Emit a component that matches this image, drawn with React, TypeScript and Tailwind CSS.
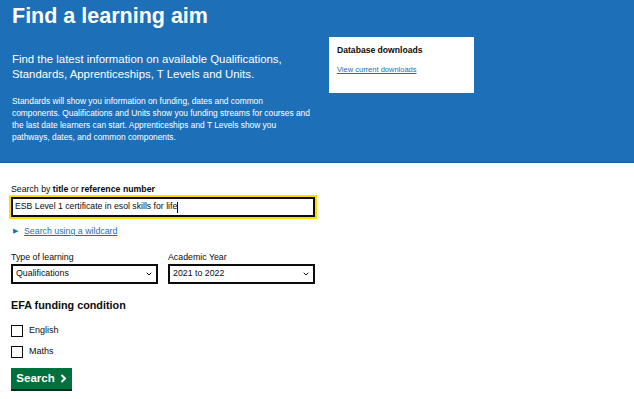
import { ChevronDown } from 'lucide-react';

const font = { fontFamily: '"Liberation Sans", Arial, sans-serif' };

function Select({ value }: { value: string }) {
  return (
    <div className="flex items-center justify-between h-[20px] border-2 border-[#0b0c0c] pl-[3px] pr-[3px] text-[8.8px] text-[#0b0c0c] bg-white">
      <span>{value}</span>
      <ChevronDown className="w-[8px] h-[8px]" strokeWidth={3} />
    </div>
  );
}

function Checkbox({ label }: { label: string }) {
  return (
    <label className="flex items-center gap-[6px] h-[12px]">
      <span className="w-[12px] h-[12px] border-[1.5px] border-[#0b0c0c] bg-white" />
      <span className="text-[9px] text-[#0b0c0c]">{label}</span>
    </label>
  );
}

export default function App() {
  return (
    <div className="w-[634px] h-[399px] bg-white overflow-hidden" style={font}>
      <div className="bg-[#1d70b8] h-[163px] border-b border-[#175e9c] px-[12px] text-white">
        <h1 className="text-[21.5px] font-bold leading-[32px]">Find a learning aim</h1>
        <div className="flex gap-[17px]">
          <div className="w-[300px]">
            <p className="text-[11.4px] leading-[15px] mt-[20px]">
              Find the latest information on available Qualifications, Standards, Apprenticeships, T Levels and Units.
            </p>
            <p className="text-[8.4px] leading-[12px] mt-[13px]">
              Standards will show you information on funding, dates and common components. Qualifications and Units show you funding streams for courses and the last date learners can start. Apprenticeships and T Levels show you pathways, dates, and common components.
            </p>
          </div>
          <div className="mt-[5px] w-[145px] h-[56px] bg-white text-[#0b0c0c] px-[8px] pt-[7px]">
            <div className="text-[8.6px] font-bold leading-[12px]">Database downloads</div>
            <a className="block mt-[9px] text-[7.5px] leading-[10px] text-[#1d70b8] underline">View current downloads</a>
          </div>
        </div>
      </div>
      <div className="px-[11px] pt-[20px] text-[#0b0c0c]">
        <div className="text-[8.75px] leading-[12px]">
          Search by <b>title</b> or <b>reference number</b>
        </div>
        <div className="mt-[2px] w-[304px] h-[20px] border-2 border-[#0b0c0c] outline outline-2 outline-[#ffdd00] flex items-center pl-[2px] text-[8.7px]">
          ESB Level 1 certificate in esol skills for life
          <span className="w-[1px] h-[11px] bg-[#0b0c0c]" />
        </div>
        <div className="flex items-center gap-[6px] mt-[8px] ml-[2px] text-[8.8px] leading-[12px]">
          <span className="text-[#1d70b8] text-[7px]">▶</span>
          <a className="text-[#1d70b8] underline">Search using a wildcard</a>
        </div>
        <div className="flex gap-[10px] mt-[14px]">
          <div className="w-[147px]">
            <div className="text-[8.8px] leading-[12px] mb-[1px]">Type of learning</div>
            <Select value="Qualifications" />
          </div>
          <div className="w-[147px]">
            <div className="text-[8.8px] leading-[12px] mb-[1px]">Academic Year</div>
            <Select value="2021 to 2022" />
          </div>
        </div>
        <h2 className="text-[10.8px] font-bold leading-[15px] mt-[14px]">EFA funding condition</h2>
        <div className="flex flex-col gap-[9px] mt-[12px]">
          <Checkbox label="English" />
          <Checkbox label="Maths" />
        </div>
        <button className="mt-[10px] h-[21px] w-[61px] bg-[#00703c] text-white font-bold text-[11.5px] flex items-center justify-center gap-[5px] shadow-[0_2px_0_#002d18]">
          Search
          <svg width="7" height="9" viewBox="0 0 7 9" fill="none"><path d="M1.5 1l3.5 3.5L1.5 8" stroke="white" strokeWidth="2" /></svg>
        </button>
      </div>
    </div>
  );
}
